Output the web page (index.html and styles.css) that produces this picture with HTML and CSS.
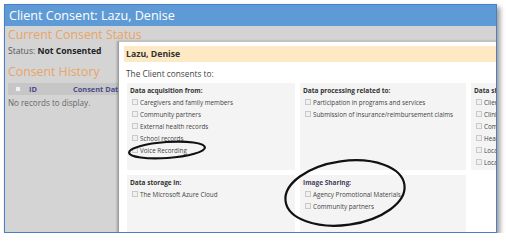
FILE: index.html
```html
<!DOCTYPE html>
<html lang="en">
<head>
  <meta charset="UTF-8" />
  <meta name="viewport" content="width=device-width, initial-scale=1.0"/>
  <title>Client Consent</title>
  <link rel="stylesheet" href="styles.css">
</head>
<body>
  <div class="window">
    <div class="titlebar">Client Consent: Lazu, Denise</div>

    <div class="content">
      <div class="page">
        <h2 class="section-title">Current Consent Status</h2>
        <p class="status">Status: <b>Not Consented</b></p>

        <h2 class="section-title history">Consent History</h2>
        <div class="grid-header">
          <span class="checkbox"></span>
          <span class="col-id">ID</span>
          <span class="col-date">Consent Date</span>
        </div>
        <p class="empty">No records to display.</p>
      </div>

      <!-- modal dialog, lies over the page -->
      <div class="dialog">
        <div class="dialog-title">Lazu, Denise</div>
        <p class="intro">The Client consents to:</p>

        <div class="consent-groups">
          <div class="group">
            <div class="group-title">Data acquisition from:</div>
            <div class="option"><span class="checkbox"></span>Caregivers and family members</div>
            <div class="option"><span class="checkbox"></span>Community partners</div>
            <div class="option"><span class="checkbox"></span>External health records</div>
            <div class="option"><span class="checkbox"></span>School records</div>
            <div class="option"><span class="checkbox"></span>Voice Recording</div>
          </div>

          <div class="group">
            <div class="group-title">Data processing related to:</div>
            <div class="option"><span class="checkbox"></span>Participation in programs and services</div>
            <div class="option"><span class="checkbox"></span>Submission of insurance/reimbursement claims</div>
          </div>

          <div class="group">
            <div class="group-title">Data sharing with:</div>
            <div class="option"><span class="checkbox"></span>Client's family</div>
            <div class="option"><span class="checkbox"></span>Clinical providers</div>
            <div class="option"><span class="checkbox"></span>Community partners</div>
            <div class="option"><span class="checkbox"></span>Health authorities</div>
            <div class="option"><span class="checkbox"></span>Local agencies</div>
            <div class="option"><span class="checkbox"></span>Local government</div>
          </div>

          <div class="group">
            <div class="group-title">Data storage in:</div>
            <div class="option"><span class="checkbox"></span>The Microsoft Azure Cloud</div>
          </div>

          <div class="group">
            <div class="group-title image">Image Sharing:</div>
            <div class="option"><span class="checkbox"></span>Agency Promotional Materials</div>
            <div class="option"><span class="checkbox"></span>Community partners</div>
          </div>
        </div>
      </div>
    </div>
  </div>

  <!-- hand-drawn highlight marks -->
  <svg class="annotations" width="506" height="242" viewBox="0 0 506 242">
    <ellipse cx="167" cy="150" rx="38" ry="8" transform="rotate(-4 167 150)" />
    <ellipse cx="345" cy="193" rx="60" ry="32" transform="rotate(-8 345 193)" />
  </svg>
</body>
</html>
```

FILE: styles.css
```css
body {
  font-family: "Open Sans", "Noto Sans", sans-serif;
  margin: 0;
  padding: 0;
  background: white;
}

.window {
  width: 491px;
  height: 227px;
  margin: 4px 0 0 4px;
  border: 1px solid #4b7ec6;
  box-shadow: 3px 3px 5px rgba(0, 0, 0, 0.4);
  overflow: hidden;
  background: #d4d4d4;
}

.titlebar {
  height: 21px;
  line-height: 21px;
  padding-left: 4px;
  background: #5e9bd6;
  color: white;
  font-size: 12.6px;
  white-space: nowrap;
}

.content {
  position: relative;
  height: 206px;
  overflow: hidden;
}

/* page behind the dialog */
.page {
  padding-left: 3px;
}

.section-title {
  margin: 1px 0 0;
  font-size: 12.3px;
  font-weight: normal;
  line-height: 16px;
  color: #e9a466;
  white-space: nowrap;
}

.section-title.history {
  margin-top: 7px;
}

.status {
  margin: 2px 0 0;
  font-size: 8.6px;
  line-height: 12px;
  color: #555;
  white-space: nowrap;
}

.status b {
  color: #222;
}

.grid-header {
  display: flex;
  align-items: center;
  height: 12px;
  margin-top: 3px;
  padding-left: 7px;
  background: #c6c6c6;
  font-size: 7.4px;
  font-weight: bold;
  color: #4b4b8c;
  white-space: nowrap;
}

.grid-header .checkbox {
  width: 4px;
  height: 4px;
  margin: 0 8px 0 0;
}

.col-id {
  flex: none;
  width: 44px;
}

.empty {
  margin: 2px 0 0;
  font-size: 8.1px;
  line-height: 12px;
  color: #666;
  white-space: nowrap;
}

/* modal dialog */
.dialog {
  position: absolute;
  top: 15px;
  left: 113px;
  width: 440px;
  height: 200px;
  padding: 4px 0 0 5px;
  background: white;
  border-left: 1px solid #9c9c9c;
  border-top: 1px solid #c2c2c2;
  box-shadow: -1px 0 2px rgba(0, 0, 0, 0.25);
}

.dialog-title {
  height: 16px;
  line-height: 16px;
  padding-left: 2px;
  background: #fde9c3;
  font-size: 8.7px;
  font-weight: bold;
  color: #333;
}

.intro {
  margin: 6px 0 0 2px;
  font-size: 8.3px;
  line-height: 12px;
  color: #444;
}

.consent-groups {
  display: grid;
  grid-template-columns: 168px 166px 166px;
  grid-template-rows: 87px 70px;
  gap: 5px;
  margin: 3px 0 0 3px;
}

.group {
  padding: 3px;
  background: #f4f4f4;
  white-space: nowrap;
  overflow: hidden;
}

.group-title {
  font-size: 6.5px;
  font-weight: bold;
  line-height: 10px;
  color: #333;
}

.group-title.image {
  color: #4a3d5c;
}

.option {
  display: flex;
  align-items: center;
  height: 12px;
  font-size: 6.3px;
  color: #444;
}

.checkbox {
  flex: none;
  display: inline-block;
  width: 4px;
  height: 4px;
  margin: 0 2px;
  border: 1px solid #c9c9c9;
  background: #f0f0f0;
}

.annotations {
  position: absolute;
  top: 0;
  left: 0;
  pointer-events: none;
}

.annotations ellipse {
  fill: none;
  stroke: #111;
  stroke-width: 2.2;
}
```
